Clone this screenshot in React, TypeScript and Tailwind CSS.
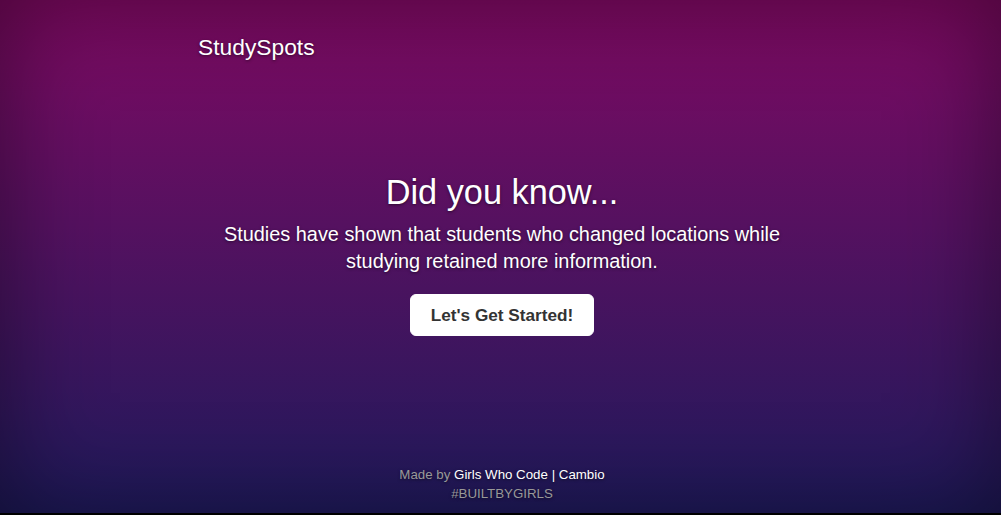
import React from "react";

export default function App() {
  return (
    <div className="h-[515px] w-full bg-black" style={{ fontFamily: '"Liberation Sans", Arial, sans-serif' }}>
      <div className="relative flex h-[513px] w-full flex-col bg-[linear-gradient(to_bottom,#7f0a63,#1f1a5c)] text-white shadow-[inset_0_0_100px_rgba(0,0,0,0.45)] [text-shadow:0_1px_3px_rgba(0,0,0,0.5)]">
        <header className="mx-auto w-[605px] pt-[35px]">
          <h3 className="text-[22.8px] leading-[24px]">StudySpots</h3>
        </header>
        <main className="mx-auto mt-[114px] flex w-[605px] flex-col items-center pl-[3px] text-center">
          <h1 className="text-[34.3px] leading-[38px]">Did you know...</h1>
          <p className="mt-[10px] text-[19.9px] leading-[27px]">
            Studies have shown that students who changed locations while studying retained more information.
          </p>
          <a
            href="#"
            className="mt-[19px] inline-block rounded-[6px] border border-white bg-white px-[20px] py-[11px] text-[17.2px] font-bold leading-[18px] text-[#333] [text-shadow:none]"
          >
            Let's Get Started!
          </a>
        </main>
        <footer className="mt-auto pb-[10px] pl-[3px] text-center text-[13.3px] leading-[19px] text-[#999]">
          <p>
            Made by <a href="#" className="text-white">Girls Who Code</a> <span className="text-white">|</span>{" "}
            <a href="#" className="text-white">Cambio</a>
          </p>
          <p>#BUILTBYGIRLS</p>
        </footer>
      </div>
    </div>
  );
}
